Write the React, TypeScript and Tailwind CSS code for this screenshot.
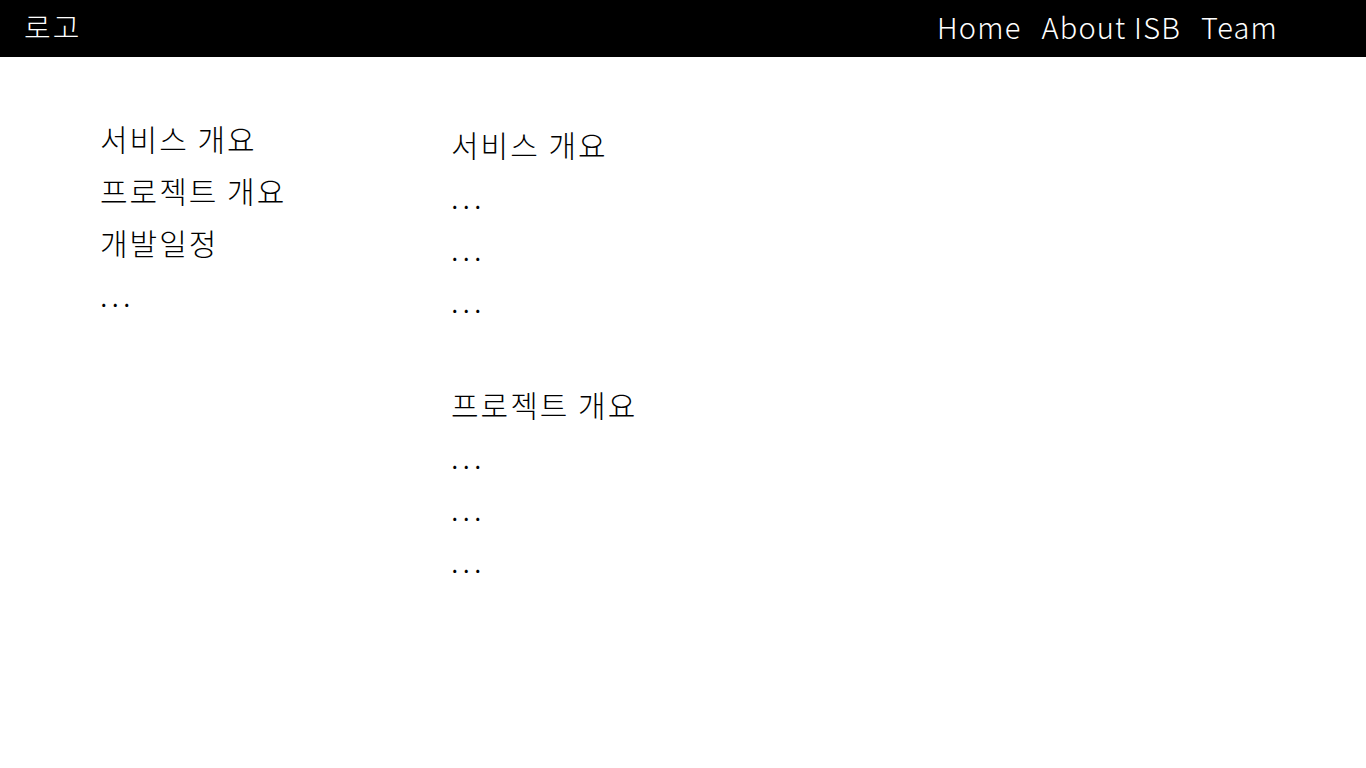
const sideItems = ['서비스 개요', '프로젝트 개요', '개발일정', '...']

const sections = [
  { title: '서비스 개요', lines: ['...', '...', '...'] },
  { title: '프로젝트 개요', lines: ['...', '...', '...'] },
]

function Line({ text }: { text: string }) {
  // dots get wider spacing, like the reference's placeholder rows
  return <div className={text === '...' ? 'tracking-[4px]' : ''}>{text}</div>
}

export default function App() {
  return (
    <div className="min-h-screen bg-white font-['Noto_Sans_CJK_KR',sans-serif] font-light tracking-[2px] text-black">
      <header className="flex h-[57px] items-center justify-between bg-black pb-1 pl-6 pr-[88px] text-[29px] text-white">
        <span>로고</span>
        <nav className="flex gap-5 tracking-[1.2px]">
          <a href="#">Home</a>
          <a href="#">About ISB</a>
          <a href="#">Team</a>
        </nav>
      </header>

      <div className="flex pl-[100px] pt-[55px] text-[30px] leading-[52px]">
        <aside className="w-[351px]">
          {sideItems.map((item, i) => (
            <Line key={i} text={item} />
          ))}
        </aside>
        <main className="pt-[6px]">
          {sections.map((s) => (
            <section key={s.title} className="mb-[52px]">
              <h2>{s.title}</h2>
              {s.lines.map((line, i) => (
                <Line key={i} text={line} />
              ))}
            </section>
          ))}
        </main>
      </div>
    </div>
  )
}
